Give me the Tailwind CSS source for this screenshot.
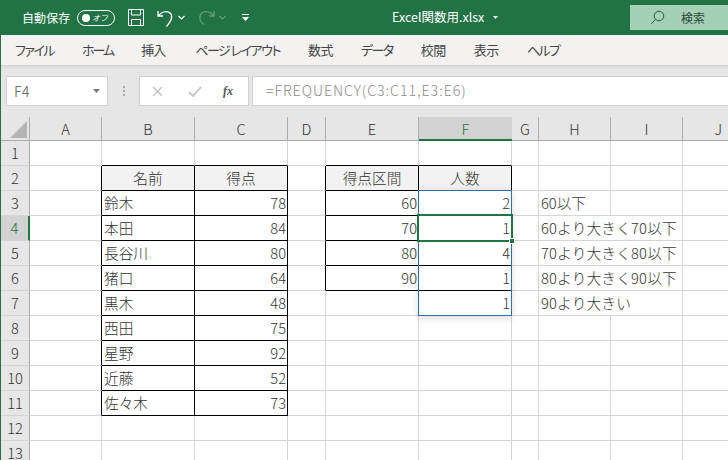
<!DOCTYPE html>
<html lang="ja">
<head>
<meta charset="utf-8">
<title>Excel関数用.xlsx</title>
<script src="https://cdn.jsdelivr.net/npm/@tailwindcss/browser@4"></script>
</head>
<body class="w-[728px] h-[460px] overflow-hidden bg-white font-['Noto_Sans_CJK_JP','Liberation_Sans',sans-serif] font-light text-[#333]">

<!-- title bar -->
<div class="h-[35px] bg-[#217346] flex items-center text-white relative font-normal">
  <span class="ml-[22px] text-[12px] tracking-[0.1px] w-[55px]">自動保存</span>
  <div class="w-[38px] h-[16px] border border-white rounded-full flex items-center px-[4px] justify-between">
    <span class="w-[8px] h-[8px] rounded-full bg-white"></span>
    <span class="text-[8px] italic leading-none mr-[2px]">オフ</span>
  </div>
  <svg class="ml-[13px]" width="16" height="17" viewBox="0 0 16 17" fill="none" stroke="#fff" stroke-width="1"><path d="M.5.5h15v16H.5zM3.5.5v5.500h9V.5M3.500 16.500v-6h9v6"/></svg>
  <svg class="ml-[13px]" width="17" height="18" viewBox="0 0 17 18" fill="none" stroke="#fff" stroke-width="1.300"><path d="M1 2v5h5M1.300 7C4 3 9 1.500 12.500 3.500c3.500 2.500 3 7-3 14"/></svg>
  <svg class="ml-[4px]" width="7" height="5" viewBox="0 0 7 5" fill="none" stroke="#fff" stroke-width="1.200"><path d="M.5 1l3 3 3-3"/></svg>
  <svg class="ml-[13px]" width="17" height="18" viewBox="0 0 17 18" fill="none" stroke="#fff" stroke-opacity=".3" stroke-width="1.300"><path d="M16 2v5h-5M15.700 7C13 3 8 1.500 4.500 3.500c-3.500 2.500-4 8 1.500 12"/></svg>
  <svg class="ml-[4px]" width="7" height="5" viewBox="0 0 7 5" fill="none" stroke="#fff" stroke-opacity=".3" stroke-width="1.200"><path d="M.5 1l3 3 3-3"/></svg>
  <svg class="ml-[16px]" width="7" height="7" viewBox="0 0 7 7" fill="#fff"><path d="M0 0h7v1H0zM0 3h7L3.500 7z"/></svg>
  <span class="ml-[143px] text-[12.500px] [font-feature-settings:'palt'] w-[101px] whitespace-nowrap">Excel関数用.xlsx</span>
  <svg width="5" height="3" viewBox="0 0 5 3" fill="#fff"><path d="M0 0h5L2.500 3z"/></svg>
  <div class="ml-auto w-[98px] h-[25px] mb-[5px] bg-[#a4d0b6] flex items-center text-[#2b4a38] self-end">
    <svg class="ml-[20px]" width="15" height="15" viewBox="0 0 15 15" fill="none" stroke="#2f5a43" stroke-width="1"><circle cx="9" cy="6" r="4.800"/><path d="M5.500 9.500L.8 14.200"/></svg>
    <span class="ml-[16px] text-[12px]">検索</span>
  </div>
</div>

<!-- menu -->
<div class="h-[30px] bg-[#f3f2f1] flex items-center pl-[14px] gap-[28px] text-[13px] text-[#444] font-normal [font-feature-settings:'palt'] border-l border-[#217346]">
  <span class="tracking-[-1.500px]">ファイル</span><span class="tracking-[-2px]">ホーム</span><span class="tracking-[-1px]">挿入</span><span class="ml-[2px] tracking-[-1.500px]">ページ&nbsp;レイアウト</span><span class="tracking-[-0.500px]">数式</span><span class="tracking-[-1.500px]">データ</span><span class="tracking-[-0.500px]">校閲</span><span class="tracking-[-0.500px]">表示</span><span class="tracking-[-1.500px]">ヘルプ</span>
</div>

<!-- formula bar -->
<div class="h-[52px] bg-[#e6e6e6] border-l border-[#217346] bg-linear-to-b from-[#d4d4d4] from-0% to-[#e6e6e6] to-[8%] flex items-start pt-[11px]">
  <div class="ml-[5px] w-[102px] h-[30px] bg-white border border-[#d0d0d0] flex items-center justify-between pl-[7px] pr-[7px] text-[14.500px] text-[#555]">
    <span>F4</span>
    <svg width="7" height="4" viewBox="0 0 7 4" fill="#777"><path d="M0 0h7L3.500 4z"/></svg>
  </div>
  <div class="w-[31px] h-[30px] flex flex-col items-center justify-center gap-[2px]">
    <span class="w-[2px] h-[2px] bg-[#a8a8a8]"></span><span class="w-[2px] h-[2px] bg-[#a8a8a8]"></span><span class="w-[2px] h-[2px] bg-[#a8a8a8]"></span>
  </div>
  <div class="w-[110px] h-[30px] bg-white border border-[#d0d0d0] flex items-center pl-[12px]">
    <svg width="11" height="11" viewBox="0 0 11 11" fill="none" stroke="#c4c4c4" stroke-width="1.500"><path d="M1 1l9 9M10 1l-9 9"/></svg>
    <svg class="ml-[25px]" width="14" height="11" viewBox="0 0 14 11" fill="none" stroke="#c4c4c4" stroke-width="1.800"><path d="M1 6l4 4 8-9"/></svg>
    <span class="ml-[21px] text-[12px] italic font-bold font-['Liberation_Serif',serif] text-[#555]">fx</span>
  </div>
  <div class="ml-[3px] flex-1 h-[30px] bg-white border border-[#d0d0d0] border-r-0 flex items-center pl-[13px] text-[14.200px] text-[#8a8a8a] tracking-[0.950px]">=FREQUENCY(C3:C11,E3:E6)</div>
</div>

<!-- sheet -->
<div class="relative grid grid-cols-[29px_72px_93px_93px_38px_93px_93px_27px_72px_72px_45px] grid-rows-[24px_repeat(13,25px)] text-[14.670px] leading-[24px] border-l border-[#217346]">
  <!-- column headers -->
  <div class="bg-[#e6e6e6] border-r border-b border-[#ababab] flex items-end justify-end p-[2px]"><svg width="17" height="17" viewBox="0 0 17 17" fill="#b4b4b4"><path d="M17 0v17H0z"/></svg></div>
  <div class="bg-[#e6e6e6] border-r border-b border-[#ababab] text-center">A</div>
  <div class="bg-[#e6e6e6] border-r border-b border-[#ababab] text-center">B</div>
  <div class="bg-[#e6e6e6] border-r border-b border-[#ababab] text-center">C</div>
  <div class="bg-[#e6e6e6] border-r border-b border-[#ababab] text-center">D</div>
  <div class="bg-[#e6e6e6] border-r border-b border-[#ababab] text-center">E</div>
  <div class="bg-[#d2d2d2] border-b-2 border-b-[#217346] text-center text-[#217346]">F</div>
  <div class="bg-[#e6e6e6] border-r border-b border-[#ababab] text-center">G</div>
  <div class="bg-[#e6e6e6] border-r border-b border-[#ababab] text-center">H</div>
  <div class="bg-[#e6e6e6] border-r border-b border-[#ababab] text-center">I</div>
  <div class="bg-[#e6e6e6] border-b border-[#ababab] text-right pr-[6px]">J</div>

  <!-- 1 -->
  <div class="bg-[#e6e6e6] border-r border-b border-r-[#ababab] border-b-[#d4d4d4] text-center">1</div>
  <div class="border-r border-b border-[#d4d4d4]"></div>
  <div class="border-r border-b border-[#d4d4d4] border-b-black"></div>
  <div class="border-r border-b border-[#d4d4d4] border-b-black"></div>
  <div class="border-r border-b border-[#d4d4d4]"></div>
  <div class="border-r border-b border-[#d4d4d4] border-b-black"></div>
  <div class="border-r border-b border-[#d4d4d4] border-b-black"></div>
  <div class="border-r border-b border-[#d4d4d4]"></div>
  <div class="border-r border-b border-[#d4d4d4]"></div>
  <div class="border-r border-b border-[#d4d4d4]"></div>
  <div class="border-b border-[#d4d4d4]"></div>

  <!-- 2 -->
  <div class="bg-[#e6e6e6] border-r border-b border-r-[#ababab] border-b-[#d4d4d4] text-center">2</div>
  <div class="border-r border-b border-[#d4d4d4] border-r-black"></div>
  <div class="bg-[#f2f2f2] border-r border-b border-black text-center">名前</div>
  <div class="bg-[#f2f2f2] border-r border-b border-black text-center">得点</div>
  <div class="border-r border-b border-[#d4d4d4] border-r-black"></div>
  <div class="bg-[#f2f2f2] border-r border-b border-black text-center">得点区間</div>
  <div class="bg-[#f2f2f2] border-r border-b border-black text-center">人数</div>
  <div class="border-r border-b border-[#d4d4d4]"></div>
  <div class="border-r border-b border-[#d4d4d4]"></div>
  <div class="border-r border-b border-[#d4d4d4]"></div>
  <div class="border-b border-[#d4d4d4]"></div>

  <!-- 3 -->
  <div class="bg-[#e6e6e6] border-r border-b border-r-[#ababab] border-b-[#d4d4d4] text-center">3</div>
  <div class="border-r border-b border-[#d4d4d4] border-r-black"></div>
  <div class="border-r border-b border-black pl-[2px]">鈴木</div>
  <div class="border-r border-b border-black text-right pr-[1px]">78</div>
  <div class="border-r border-b border-[#d4d4d4] border-r-black"></div>
  <div class="border-r border-b border-black text-right pr-[1px]">60</div>
  <div class="border-r border-b border-black text-right pr-[1px]">2</div>
  <div class="border-r border-b border-[#d4d4d4]"></div>
  <div class="border-r border-b border-[#d4d4d4] pl-[2px] whitespace-nowrap">60以下</div>
  <div class="border-r border-b border-[#d4d4d4]"></div>
  <div class="border-b border-[#d4d4d4]"></div>

  <!-- 4 -->
  <div class="bg-[#d2d2d2] border-r-2 border-b border-r-[#217346] border-b-[#d4d4d4] text-center text-[#217346]">4</div>
  <div class="border-r border-b border-[#d4d4d4] border-r-black"></div>
  <div class="border-r border-b border-black pl-[2px]">本田</div>
  <div class="border-r border-b border-black text-right pr-[1px]">84</div>
  <div class="border-r border-b border-[#d4d4d4] border-r-black"></div>
  <div class="border-r border-b border-black text-right pr-[1px]">70</div>
  <div class="border-r border-b border-black text-right pr-[1px]">1</div>
  <div class="border-r border-b border-[#d4d4d4]"></div>
  <div class="border-b border-[#d4d4d4] pl-[2px] whitespace-nowrap tracking-[0.200px]">60より大きく70以下</div>
  <div class="border-r border-b border-[#d4d4d4]"></div>
  <div class="border-b border-[#d4d4d4]"></div>

  <!-- 5 -->
  <div class="bg-[#e6e6e6] border-r border-b border-r-[#ababab] border-b-[#d4d4d4] text-center">5</div>
  <div class="border-r border-b border-[#d4d4d4] border-r-black"></div>
  <div class="border-r border-b border-black pl-[2px]">長谷川</div>
  <div class="border-r border-b border-black text-right pr-[1px]">80</div>
  <div class="border-r border-b border-[#d4d4d4] border-r-black"></div>
  <div class="border-r border-b border-black text-right pr-[1px]">80</div>
  <div class="border-r border-b border-black text-right pr-[1px]">4</div>
  <div class="border-r border-b border-[#d4d4d4]"></div>
  <div class="border-b border-[#d4d4d4] pl-[2px] whitespace-nowrap tracking-[0.200px]">70より大きく80以下</div>
  <div class="border-r border-b border-[#d4d4d4]"></div>
  <div class="border-b border-[#d4d4d4]"></div>

  <!-- 6 -->
  <div class="bg-[#e6e6e6] border-r border-b border-r-[#ababab] border-b-[#d4d4d4] text-center">6</div>
  <div class="border-r border-b border-[#d4d4d4] border-r-black"></div>
  <div class="border-r border-b border-black pl-[2px]">猪口</div>
  <div class="border-r border-b border-black text-right pr-[1px]">64</div>
  <div class="border-r border-b border-[#d4d4d4] border-r-black"></div>
  <div class="border-r border-b border-black text-right pr-[1px]">90</div>
  <div class="border-r border-b border-black text-right pr-[1px]">1</div>
  <div class="border-r border-b border-[#d4d4d4]"></div>
  <div class="border-b border-[#d4d4d4] pl-[2px] whitespace-nowrap tracking-[0.200px]">80より大きく90以下</div>
  <div class="border-r border-b border-[#d4d4d4]"></div>
  <div class="border-b border-[#d4d4d4]"></div>

  <!-- 7 -->
  <div class="bg-[#e6e6e6] border-r border-b border-r-[#ababab] border-b-[#d4d4d4] text-center">7</div>
  <div class="border-r border-b border-[#d4d4d4] border-r-black"></div>
  <div class="border-r border-b border-black pl-[2px]">黒木</div>
  <div class="border-r border-b border-black text-right pr-[1px]">48</div>
  <div class="border-r border-b border-[#d4d4d4]"></div>
  <div class="border-r border-b border-[#d4d4d4]"></div>
  <div class="border-r border-b border-[#d4d4d4] text-right pr-[1px]">1</div>
  <div class="border-r border-b border-[#d4d4d4]"></div>
  <div class="border-b border-[#d4d4d4] pl-[2px] whitespace-nowrap tracking-[0.200px]">90より大きい</div>
  <div class="border-r border-b border-[#d4d4d4]"></div>
  <div class="border-b border-[#d4d4d4]"></div>

  <!-- 8 -->
  <div class="bg-[#e6e6e6] border-r border-b border-r-[#ababab] border-b-[#d4d4d4] text-center">8</div>
  <div class="border-r border-b border-[#d4d4d4] border-r-black"></div>
  <div class="border-r border-b border-black pl-[2px]">西田</div>
  <div class="border-r border-b border-black text-right pr-[1px]">75</div>
  <div class="border-r border-b border-[#d4d4d4]"></div>
  <div class="border-r border-b border-[#d4d4d4]"></div>
  <div class="border-r border-b border-[#d4d4d4]"></div>
  <div class="border-r border-b border-[#d4d4d4]"></div>
  <div class="border-r border-b border-[#d4d4d4]"></div>
  <div class="border-r border-b border-[#d4d4d4]"></div>
  <div class="border-b border-[#d4d4d4]"></div>

  <!-- 9 -->
  <div class="bg-[#e6e6e6] border-r border-b border-r-[#ababab] border-b-[#d4d4d4] text-center">9</div>
  <div class="border-r border-b border-[#d4d4d4] border-r-black"></div>
  <div class="border-r border-b border-black pl-[2px]">星野</div>
  <div class="border-r border-b border-black text-right pr-[1px]">92</div>
  <div class="border-r border-b border-[#d4d4d4]"></div>
  <div class="border-r border-b border-[#d4d4d4]"></div>
  <div class="border-r border-b border-[#d4d4d4]"></div>
  <div class="border-r border-b border-[#d4d4d4]"></div>
  <div class="border-r border-b border-[#d4d4d4]"></div>
  <div class="border-r border-b border-[#d4d4d4]"></div>
  <div class="border-b border-[#d4d4d4]"></div>

  <!-- 10 -->
  <div class="bg-[#e6e6e6] border-r border-b border-r-[#ababab] border-b-[#d4d4d4] text-center">10</div>
  <div class="border-r border-b border-[#d4d4d4] border-r-black"></div>
  <div class="border-r border-b border-black pl-[2px]">近藤</div>
  <div class="border-r border-b border-black text-right pr-[1px]">52</div>
  <div class="border-r border-b border-[#d4d4d4]"></div>
  <div class="border-r border-b border-[#d4d4d4]"></div>
  <div class="border-r border-b border-[#d4d4d4]"></div>
  <div class="border-r border-b border-[#d4d4d4]"></div>
  <div class="border-r border-b border-[#d4d4d4]"></div>
  <div class="border-r border-b border-[#d4d4d4]"></div>
  <div class="border-b border-[#d4d4d4]"></div>

  <!-- 11 -->
  <div class="bg-[#e6e6e6] border-r border-b border-r-[#ababab] border-b-[#d4d4d4] text-center">11</div>
  <div class="border-r border-b border-[#d4d4d4] border-r-black"></div>
  <div class="border-r border-b border-black pl-[2px]">佐々木</div>
  <div class="border-r border-b border-black text-right pr-[1px]">73</div>
  <div class="border-r border-b border-[#d4d4d4]"></div>
  <div class="border-r border-b border-[#d4d4d4]"></div>
  <div class="border-r border-b border-[#d4d4d4]"></div>
  <div class="border-r border-b border-[#d4d4d4]"></div>
  <div class="border-r border-b border-[#d4d4d4]"></div>
  <div class="border-r border-b border-[#d4d4d4]"></div>
  <div class="border-b border-[#d4d4d4]"></div>

  <!-- 12 -->
  <div class="bg-[#e6e6e6] border-r border-b border-r-[#ababab] border-b-[#d4d4d4] text-center">12</div>
  <div class="border-r border-b border-[#d4d4d4]"></div>
  <div class="border-r border-b border-[#d4d4d4]"></div>
  <div class="border-r border-b border-[#d4d4d4]"></div>
  <div class="border-r border-b border-[#d4d4d4]"></div>
  <div class="border-r border-b border-[#d4d4d4]"></div>
  <div class="border-r border-b border-[#d4d4d4]"></div>
  <div class="border-r border-b border-[#d4d4d4]"></div>
  <div class="border-r border-b border-[#d4d4d4]"></div>
  <div class="border-r border-b border-[#d4d4d4]"></div>
  <div class="border-b border-[#d4d4d4]"></div>

  <!-- 13 -->
  <div class="bg-[#e6e6e6] border-r border-b border-r-[#ababab] border-b-[#d4d4d4] text-center">13</div>
  <div class="border-r border-b border-[#d4d4d4]"></div>
  <div class="border-r border-b border-[#d4d4d4]"></div>
  <div class="border-r border-b border-[#d4d4d4]"></div>
  <div class="border-r border-b border-[#d4d4d4]"></div>
  <div class="border-r border-b border-[#d4d4d4]"></div>
  <div class="border-r border-b border-[#d4d4d4]"></div>
  <div class="border-r border-b border-[#d4d4d4]"></div>
  <div class="border-r border-b border-[#d4d4d4]"></div>
  <div class="border-r border-b border-[#d4d4d4]"></div>
  <div class="border-b border-[#d4d4d4]"></div>

  <!-- spill range and active cell -->
  <div class="absolute col-[7/8] row-[4/9] -left-px -top-px right-0 bottom-0 border border-[#2f6ea8] shadow-[0_2px_8px_rgba(0,0,0,0.15)] pointer-events-none"></div>
  <div class="absolute col-[7/8] row-[5/6] -left-[2px] -top-[2px] -right-px -bottom-px border-2 border-[#217346]">
    <span class="absolute -right-[4px] -bottom-[4px] w-[4px] h-[4px] bg-[#217346] border border-white box-content"></span>
  </div>
</div>
</body>
</html>
